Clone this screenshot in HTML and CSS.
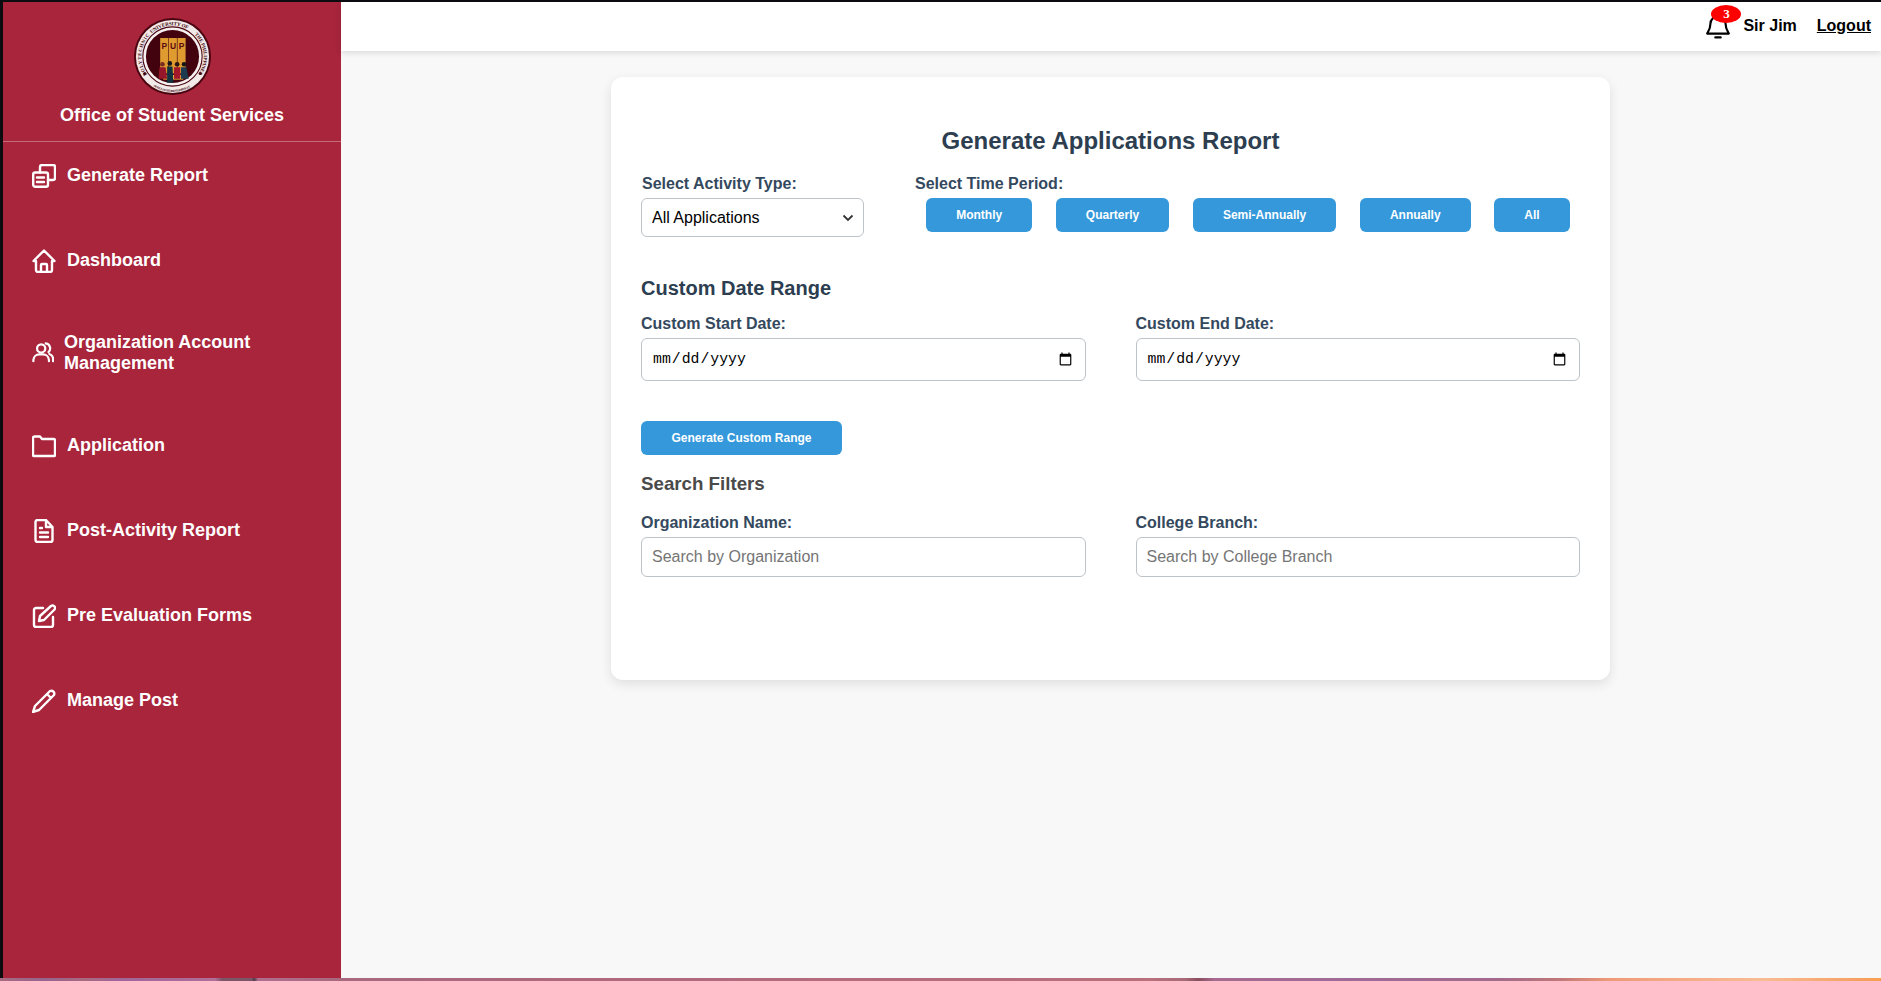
FILE: index.html
```html
<!DOCTYPE html>
<html lang="en">
<head>
<meta charset="utf-8">
<title>Generate Applications Report</title>
<link rel="stylesheet" href="styles.css">
</head>
<body>
<div class="frame">
  <aside class="sidebar">
    <header class="brand">
      <svg class="logo" viewBox="0 0 100 100" aria-label="Office of Student Services seal">
        <defs>
          <path id="arc-left" d="M16.800 73.200A40.500 40.500 0 0 1 21.400 21.400"/>
          <path id="arc-top" d="M21.400 21.400A40.500 40.500 0 0 1 78.600 21.400"/>
          <path id="arc-right" d="M78.600 21.400A40.500 40.500 0 0 1 83.200 73.200"/>
          <path id="arc-bottom" d="M20.400 85.200A46 46 0 0 0 79.600 85.200"/>
        </defs>
        <circle cx="50" cy="50" r="50" fill="#4a0510"/>
        <circle cx="50" cy="50" r="47.500" fill="#f2e9e9"/>
        <circle cx="50" cy="50" r="38.500" fill="#f6f0f0" stroke="#4a0510" stroke-width="1.400"/>
        <circle cx="50" cy="50" r="34.500" fill="#43030e"/>
        <circle cx="14" cy="72" r="2" fill="#4a0510"/>
        <circle cx="86" cy="72" r="2" fill="#4a0510"/>
        <text class="seal-ring"><textPath href="#arc-left" textLength="55">POLYTECHNIC</textPath></text>
        <text class="seal-ring"><textPath href="#arc-top" textLength="50" startOffset="2">UNIVERSITY OF</textPath></text>
        <text class="seal-ring"><textPath href="#arc-right" textLength="55">THE PHILIPPINES</textPath></text>
        <text class="seal-small"><textPath href="#arc-bottom" textLength="50" startOffset="6">OFFICE OF STUDENT SERVICES</textPath></text>
        <rect x="34" y="26" width="10.500" height="46" fill="#df9a30"/>
        <rect x="45.200" y="26" width="10.500" height="46" fill="#df9a30"/>
        <rect x="56.500" y="26" width="10.500" height="46" fill="#df9a30"/>
        <text class="seal-pup" x="35.700" y="40">P</text>
        <text class="seal-pup" x="46.700" y="40">U</text>
        <text class="seal-pup" x="58.200" y="40">P</text>
        <rect x="38" y="74" width="26" height="6" fill="#e8b040"/>
        <circle cx="37" cy="60" r="3" fill="#7a2a20"/><path d="M33 64h8l2 15H32z" fill="#96172a"/>
        <circle cx="46.500" cy="59" r="3" fill="#15151a"/><path d="M43 63h7l1 21h-8z" fill="#123440"/>
        <circle cx="56" cy="60" r="3" fill="#2a1510"/><path d="M52 64h8v15h-8z" fill="#a3182a"/>
        <circle cx="65" cy="60" r="3" fill="#15151a"/><path d="M61 64h7l3 15H61z" fill="#1c3a50"/>
      </svg>
      <h1 class="brand-title">Office of Student Services</h1>
    </header>
    <nav class="nav">
      <a class="nav-item" href="#">
        <svg class="icon" viewBox="0 0 24 24"><rect x="1.200" y="8.500" width="14.800" height="14.300" rx="2"/><path d="M8 8.500V3a2 2 0 0 1 2-2h11a2 2 0 0 1 2 2v11a2 2 0 0 1-2 2h-5M5 13.500h7M5 18h7"/></svg>
        <span>Generate Report</span>
      </a>
      <a class="nav-item" href="#">
        <svg class="icon" viewBox="0 0 24 24"><path d="M1.500 12 12 1.500 22.500 12H20v9a2 2 0 0 1-2 2H6a2 2 0 0 1-2-2v-9zM9 23v-7a1 1 0 0 1 1-1h4a1 1 0 0 1 1 1v7"/></svg>
        <span>Dashboard</span>
      </a>
      <a class="nav-item nav-item-wrap" href="#">
        <svg class="icon icon-small" viewBox="0 0 24 24"><circle cx="10" cy="7" r="4.500"/><path d="M1.500 21v-1.500a6.500 6.500 0 0 1 6.500-6h4a6.500 6.500 0 0 1 6.500 6V21M15 1.500a5.500 5.500 0 0 1 3 9.500M19 13a6 6 0 0 1 4 6v2"/></svg>
        <span>Organization Account Management</span>
      </a>
      <a class="nav-item" href="#">
        <svg class="icon" viewBox="0 0 24 24"><path d="M1 4a1.500 1.500 0 0 1 1.500-1.500H8L10 5h11.500A1.500 1.500 0 0 1 23 6.500V21a1 1 0 0 1-1 1H2a1 1 0 0 1-1-1z"/></svg>
        <span>Application</span>
      </a>
      <a class="nav-item" href="#">
        <svg class="icon" viewBox="0 0 24 24"><path d="M3.500 3a2 2 0 0 1 2-2H14l6.500 7v13a2 2 0 0 1-2 2H5.500a2 2 0 0 1-2-2zM14 1v7h6.500M8 13.500h8M8 18h8M8 9h2"/></svg>
        <span>Post-Activity Report</span>
      </a>
      <a class="nav-item" href="#">
        <svg class="icon" viewBox="0 0 24 24"><path d="M11 4H4a2 2 0 0 0-2 2v15a2 2 0 0 0 2 2h15a2 2 0 0 0 2-2v-8M19 2a2.500 2.500 0 0 1 3.500 3.500L12 16l-5 1 1-5z"/></svg>
        <span>Pre Evaluation Forms</span>
      </a>
      <a class="nav-item" href="#">
        <svg class="icon" viewBox="0 0 24 24"><path d="M18 2a3 3 0 0 1 4 4L7 21l-6 2 2-6zM15 5l4 4"/></svg>
        <span>Manage Post</span>
      </a>
    </nav>
  </aside>
  <div class="workspace">
    <header class="topbar">
      <div class="bell">
        <svg class="bell-icon" viewBox="0 0 24 24"><path d="M12 3a7 7 0 0 0-7 7c0 6-3 8-3 9h20c0-1-3-3-3-9a7 7 0 0 0-7-7zM9.500 22.500h5"/></svg>
        <span class="badge">3</span>
      </div>
      <span class="user">Sir Jim</span>
      <a class="logout" href="#">Logout</a>
    </header>
    <main class="content">
      <section class="card">
        <h2 class="card-title">Generate Applications Report</h2>
        <div class="controls">
          <div class="activity">
            <label class="label label-spaced" for="activity">Select Activity Type:</label>
            <select class="select" id="activity"><option>All Applications</option></select>
          </div>
          <div class="period">
            <span class="label">Select Time Period:</span>
            <div class="period-buttons">
              <button class="btn" type="button">Monthly</button>
              <button class="btn" type="button">Quarterly</button>
              <button class="btn" type="button">Semi-Annually</button>
              <button class="btn" type="button">Annually</button>
              <button class="btn" type="button">All</button>
            </div>
          </div>
        </div>
        <h3 class="section-title">Custom Date Range</h3>
        <div class="fields">
          <div class="field">
            <label class="label" for="start">Custom Start Date:</label>
            <input class="input input-date" id="start" type="date">
          </div>
          <div class="field">
            <label class="label" for="end">Custom End Date:</label>
            <input class="input input-date" id="end" type="date">
          </div>
        </div>
        <button class="btn btn-range" type="button">Generate Custom Range</button>
        <h3 class="filter-title">Search Filters</h3>
        <div class="fields">
          <div class="field">
            <label class="label" for="org">Organization Name:</label>
            <input class="input" id="org" type="text" placeholder="Search by Organization">
          </div>
          <div class="field">
            <label class="label" for="branch">College Branch:</label>
            <input class="input" id="branch" type="text" placeholder="Search by College Branch">
          </div>
        </div>
      </section>
    </main>
  </div>
</div>
<div class="wallpaper"></div>
</body>
</html>
```
FILE: styles.css
```css
* { box-sizing: border-box; }
html, body { height: 100%; }
body {
  margin: 0;
  display: flex;
  flex-direction: column;
  overflow: hidden;
  background: #0c0c10;
  font-family: "Liberation Sans", Arial, sans-serif;
}
.frame {
  flex: 1;
  min-height: 0;
  display: flex;
  margin: 2px 0 0 3px;
  background: #f8f8f8;
}
.wallpaper {
  height: 3px;
  flex: none;
  background: linear-gradient(90deg, #a86a80 0, #95648e 45px, #a86a80 85px, #a0659a 120px, #b06e98 215px, #7a5668 222px, #7a5668 252px, #4a3a48 254px, #b06e90 258px, #a8687e 340px, #b0687e 600px, #b8707c 1150px, #a86a78 1185px, #8a4f60 1198px, #a86a90 1215px, #a06a98 1350px, #a46a8c 1500px, #c07878 1560px, #f09a78 1610px, #f8bc94 1760px, #f6a060 1860px, #f8a050 100%);
}
.sidebar {
  width: 338px;
  flex: none;
  background: #a8253c;
  color: #fff;
}
.brand {
  height: 140px;
  padding-top: 16px;
  display: flex;
  flex-direction: column;
  align-items: center;
  border-bottom: 1px solid #c66b7b;
}
.logo { width: 77px; height: 77px; flex: none; }
.seal-ring { font: 700 6.500px "Liberation Serif", serif; fill: #3a0208; }
.seal-small { font: 700 4px "Liberation Serif", serif; fill: #3a0208; }
.seal-pup { font: 700 11px "Liberation Sans", Arial, sans-serif; fill: #5a0a12; }
.brand-title {
  margin: 8px 0 0;
  font-size: 18px;
  line-height: 24px;
  font-weight: 700;
}
.nav {
  display: flex;
  flex-direction: column;
  gap: 58px;
  padding: 20px 10px 0 29px;
}
.nav-item {
  display: flex;
  align-items: center;
  gap: 11px;
  min-height: 27px;
  color: #fff;
  font-size: 18px;
  line-height: 21px;
  font-weight: 700;
  text-decoration: none;
}
.nav-item-wrap { gap: 10px; }
.icon {
  width: 24px;
  height: 24px;
  flex: none;
  fill: none;
  stroke: currentColor;
  stroke-width: 2.400;
  stroke-linecap: round;
  stroke-linejoin: round;
}
.icon-small { width: 22px; height: 22px; }
.workspace {
  flex: 1;
  min-width: 0;
  display: flex;
  flex-direction: column;
}
.topbar {
  height: 49px;
  flex: none;
  display: flex;
  align-items: center;
  justify-content: flex-end;
  padding: 0 10px 2px 0;
  background: #fff;
  box-shadow: 0 2px 6px rgba(0, 0, 0, .12);
  font-size: 16px;
  font-weight: 700;
  color: #000;
}
.bell { position: relative; width: 26px; height: 26px; margin-right: 12px; }
.bell-icon { width: 26px; height: 26px; fill: none; stroke: #000; stroke-width: 2; stroke-linejoin: round; stroke-linecap: round; display: block; }
.badge {
  position: absolute;
  left: 6px;
  top: -8px;
  width: 30px;
  height: 18px;
  border-radius: 50%;
  background: #f00;
  color: #fff;
  font: 700 13px/18px "Liberation Serif", serif;
  text-align: center;
}
.user { margin-right: 20px; }
.logout { color: #000; text-decoration: underline; }
.content {
  flex: 1;
  min-height: 0;
  display: flex;
  justify-content: center;
  align-items: flex-start;
  padding: 26px 1px 0 0;
}
.card {
  width: 999px;
  height: 603px;
  padding: 48px 30px 0;
  background: #fff;
  border-radius: 12px;
  box-shadow: 0 4px 12px rgba(0, 0, 0, .1);
}
.card-title {
  margin: 0 0 17px;
  text-align: center;
  font-size: 24px;
  line-height: 32px;
  color: #2c3e50;
}
.controls { display: flex; height: 78px; align-items: flex-start; margin-bottom: 24px; }
.activity { width: 223px; margin-right: 51px; }
.period { flex: 1; }
.label {
  display: block;
  font-size: 16px;
  line-height: 20px;
  height: 24px;
  font-weight: 700;
  color: #34495e;
}
.label-spaced { padding-left: 1px; }
.select {
  display: block;
  width: 223px;
  height: 39px;
  padding: 0 30px 0 10px;
  border: 1px solid #bdc3c7;
  border-radius: 6px;
  background: #fff url("data:image/svg+xml,%3Csvg xmlns='http://www.w3.org/2000/svg' viewBox='0 0 12 8'%3E%3Cpath d='M1.500 1.500 6 6l4.500-4.500' fill='none' stroke='%23333' stroke-width='1.800'/%3E%3C/svg%3E") no-repeat right 9px center / 12px 8px;
  color: #000;
  font: 16px "Liberation Sans", Arial, sans-serif;
  appearance: none;
}
.period-buttons { display: flex; gap: 23.300px; padding-left: 11px; }
.btn {
  height: 34px;
  padding: 0 30.200px;
  border: 0;
  border-radius: 6px;
  background: #3498db;
  color: #fff;
  font: 700 12px "Liberation Sans", Arial, sans-serif;
}
.section-title {
  margin: 0 0 14px;
  font-size: 20px;
  line-height: 24px;
  color: #2c3e50;
}
.fields { display: grid; grid-template-columns: 1fr 1fr; column-gap: 50px; }
.field { min-width: 0; }
.input {
  display: block;
  width: 100%;
  height: 40px;
  padding: 0 10px;
  border: 1px solid #bdc3c7;
  border-radius: 6px;
  background: #fff;
  color: #000;
  font: 16px "Liberation Sans", Arial, sans-serif;
}
.input::placeholder { color: #757575; }
.input-date { height: 43px; font: 14.800px "Liberation Mono", monospace; }
.btn-range { display: block; margin-top: 40px; padding: 0; width: 201px; }
.filter-title {
  margin: 18px 0 18px;
  font-size: 18.720px;
  line-height: 22px;
  color: #4a4a4a;
}
```
